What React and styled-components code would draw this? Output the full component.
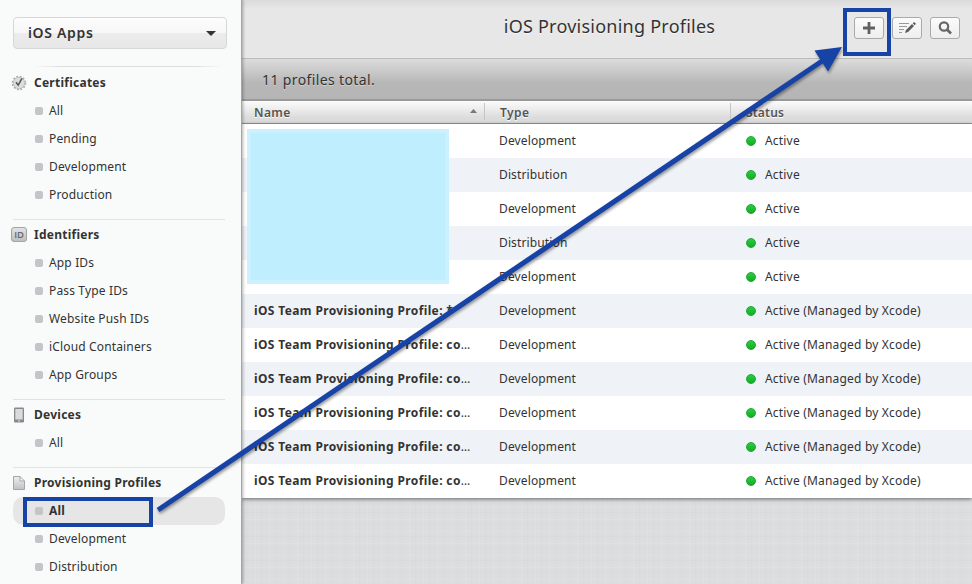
import React from 'react';
import styled, { createGlobalStyle, css } from 'styled-components';

const GlobalStyle = createGlobalStyle`
  *, *::before { box-sizing: border-box; }
  body { margin: 0; overflow: hidden; font-family: 'Noto Sans', 'Open Sans', sans-serif; color: #333; }
`;
const Page = styled.div`
  position: relative; display: flex; width: 972px; height: 584px; overflow: hidden;
`;
const Sidebar = styled.aside`
  width: 242px; flex: none; padding: 17px 0 0 13px; background: #f9fbfa;
  border-right: 1px solid #a4a5a5; box-shadow: 1px 0 3px rgba(0,0,0,.3); z-index: 1;
`;
const Picker = styled.button`
  display: flex; align-items: center; justify-content: space-between;
  width: 214px; height: 32px; padding: 0 10px 2px 14px; border: 1px solid #d6d7d7; border-radius: 4px;
  background: linear-gradient(#fdfdfd 0, #f6f6f6 50%, #ececec 51%, #e7e7e7 100%);
  font: 600 14px 'Noto Sans', sans-serif; letter-spacing: .66px; color: #333;
`;
const Caret = styled.svg`width: 10px; height: 5px; margin-top: 2px; fill: #333;`;
const TopRule = styled.div`
  width: 190px; height: 1px; margin: 17px 0 2px 20px;
  background: linear-gradient(90deg, transparent, #dcdedd 15%, #dcdedd 85%, transparent);
`;
const Section = styled.section`
  width: 212px;
  & + & { margin-top: 10px; border-top: 1px solid #e1e3e2; padding-top: 1px; }
`;
const SectionTitle = styled.h2`
  display: flex; align-items: center; height: 28px; margin: 0;
  font-size: 12px; font-weight: 700; letter-spacing: .25px; line-height: 26px;
  svg { flex: none; margin: 0 7px 0 -2px; }
`;
const Item = styled.div`
  display: flex; align-items: center; gap: 6px; height: 28px; padding-left: 22px; border-radius: 10px;
  font-size: 12px; letter-spacing: .15px; line-height: 26px;
  &::before { content: ''; width: 8px; height: 8px; border-radius: 2px; background: #c4c5c9; }
  ${p => p.$selected && css`background: #e6e6e6; font-weight: 700;`}
`;
const ItemText = styled.span`display: block; padding-bottom: 1px;`;
const Main = styled.main`
  display: flex; flex-direction: column; flex: 1;
`;
const Header = styled.header`
  display: grid; grid-template-columns: 1fr auto 1fr; height: 59px; align-items: center;
  padding: 0 12px 3px; border-bottom: 1px solid #bcbcbc;
  background: linear-gradient(#dadada, #e7e7e7 9px);
`;
const Title = styled.h1`
  grid-column: 2; margin: 0; padding: 0 0 4px 5px; font-size: 18px; font-weight: 400; letter-spacing: .24px;
  text-shadow: 0 1px rgba(255,255,255,.7);
`;
const Tools = styled.div`display: flex; gap: 8px; justify-content: flex-end;`;
const ToolButton = styled.button`
  display: grid; place-items: center; width: 30px; height: 22px; padding: 0;
  border: 1px solid #aaa; border-radius: 3px; background: linear-gradient(#fbfbfb, #eee);
`;
const Summary = styled.div`
  display: flex; align-items: center; height: 42px; padding-left: 20px;
  border-bottom: 2px solid #999; background: linear-gradient(#dcdcdc, #b7b7b7 60%, #b5b5b5);
  font-size: 14px; letter-spacing: .38px; text-shadow: 0 1px rgba(255,255,255,.4);
`;
const columns = css`display: grid; grid-template-columns: 243px 246px 1fr;`;
const Columns = styled.div`
  ${columns} height: 23px; border-bottom: 1px solid #999;
  background: linear-gradient(#fcfcfc, #dcdcdc 75%);
`;
const ColumnTitle = styled.div`
  display: flex; align-items: center; justify-content: space-between;
  height: 17px; margin-top: 2px; padding: 1px 7px 0 ${p => p.$first ? 12 : 15}px;
  font-size: 12px; font-weight: 600; letter-spacing: ${p => p.$last ? 0.2 : 0.4}px; color: #555;
  border-right: ${p => p.$last ? 0 : 1}px solid #c5c5c5; text-shadow: 0 1px #fff;
`;
const SortMark = styled.svg`width: 7px; height: 4px; margin-bottom: 3px; fill: #777;`;
const Table = styled.div`position: relative; box-shadow: 0 1px 4px rgba(0,0,0,.55);`;
const Row = styled.div`
  ${columns} height: 34px; align-items: center; padding-bottom: 1px;
  background: #fff; font-size: 12px; letter-spacing: .13px;
  &:nth-child(even) { background: #eff2f7; }
`;
const Name = styled.div`
  padding-left: 12px; font-weight: 700; letter-spacing: .37px; white-space: nowrap;
`;
const Ellipsis = styled.span`font-weight: 400; letter-spacing: 0;`;
const Type = styled.div`padding-left: 14px;`;
const Status = styled.div`
  display: flex; align-items: center; gap: 9px; padding-left: 15px;
  letter-spacing: .19px;
  &::before {
    content: ''; width: 10px; height: 10px; border-radius: 50%;
    border: 1px solid #1ea535; background: linear-gradient(#2dcc40, #10ae24);
  }
`;
const Redaction = styled.div`
  position: absolute; left: 5px; top: 5px; width: 202px; height: 155px;
  background: #bfeeff; border: 4px solid #cbf1fe;
`;
const Linen = styled.div`
  flex: 1; background-color: #dcdddf;
  background-image:
    repeating-linear-gradient(90deg, transparent 0 5px, rgba(175,180,188,.07) 5px 6px, transparent 6px 13px, rgba(255,255,255,.1) 13px 14px),
    repeating-linear-gradient(0deg, transparent 0 4px, rgba(255,255,255,.1) 4px 5px, transparent 5px 11px, rgba(175,180,188,.07) 11px 12px);
`;
const Highlight = styled.div`
  position: absolute; z-index: 2; border: 4px solid #1742a6;
  ${p => p.$target === 'add'
    ? 'left: 843px; top: 8px; width: 48px; height: 48px;'
    : 'left: 23px; top: 497px; width: 130px; height: 30px;'}
`;
const Pointer = styled.svg`
  position: absolute; inset: 0; z-index: 2; width: 972px; height: 584px; pointer-events: none;
  filter: drop-shadow(1px 2px 1.5px rgba(0,0,0,.4));
`;

const SealIcon = () => (
  <svg width="16" height="16" viewBox="0 0 16 16">
    <circle cx="8" cy="8" r="6.5" fill="none" stroke="#a6a7a9" strokeWidth="1.6" strokeDasharray="1.7 1.7" />
    <circle cx="8" cy="8" r="5.7" fill="#dcddde" stroke="#b4b5b7" strokeWidth=".8" />
    <path d="M5 7.2 7.2 10.2 11 3.4" fill="none" stroke="#555" strokeWidth="1.5" />
  </svg>
);
const IdText = styled.text`font: 600 9.5px 'Open Sans', sans-serif; letter-spacing: -.2px; fill: #66676a;`;
const IdIcon = () => (
  <svg width="16" height="16" viewBox="0 0 16 16">
    <defs><linearGradient id="plate" x2="0" y2="1"><stop stopColor="#e2e3e4" /><stop offset="1" stopColor="#bdbec0" /></linearGradient></defs>
    <rect x=".5" y=".5" width="15" height="14" rx="2.5" fill="url(#plate)" stroke="#a2a3a5" />
    <IdText x="8" y="11" textAnchor="middle">ID</IdText>
  </svg>
);
const DeviceIcon = () => (
  <svg width="16" height="16" viewBox="0 0 16 16">
    <rect x="3" y=".5" width="10" height="15" rx="1.2" fill="#88898e" />
    <rect x="4.3" y="2" width="7.4" height="10.5" fill="#dadbdd" />
    <path d="M7 14h2" stroke="#ddd" />
  </svg>
);
const FileIcon = () => (
  <svg width="16" height="16" viewBox="0 0 16 16">
    <defs><linearGradient id="paper" x2="0" y2="1"><stop stopColor="#eee" /><stop offset="1" stopColor="#c0c1c4" /></linearGradient></defs>
    <path d="M2.5 1.5H9L13.5 6V14.5H2.5ZM9 1.5V6H13.5" fill="url(#paper)" stroke="#a4a5a8" />
  </svg>
);

const sections = [
  { title: 'Certificates', Icon: SealIcon, items: ['All', 'Pending', 'Development', 'Production'] },
  { title: 'Identifiers', Icon: IdIcon, items: ['App IDs', 'Pass Type IDs', 'Website Push IDs', 'iCloud Containers', 'App Groups'] },
  { title: 'Devices', Icon: DeviceIcon, items: ['All'] },
  { title: 'Provisioning Profiles', Icon: FileIcon, items: ['All', 'Development', 'Distribution'], selected: 'All' },
];
const managed = 'Active (Managed by Xcode)';
const team = 'iOS Team Provisioning Profile: ';
const profiles = [
  ['', 'Development', 'Active'], ['', 'Distribution', 'Active'], ['', 'Development', 'Active'],
  ['', 'Distribution', 'Active'], ['', 'Development', 'Active'],
  [team + '*', 'Development', managed],
  ...Array.from({ length: 5 }, () => [team + 'co', 'Development', managed, true]),
];

export default function App() {
  return (
    <Page>
      <GlobalStyle />
      <Sidebar>
        <Picker>iOS Apps<Caret viewBox="0 0 10 5"><path d="M0 0H10L5 5Z" /></Caret></Picker>
        <TopRule />
        {sections.map(({ title, Icon, items, selected }) => (
          <Section key={title}>
            <SectionTitle><Icon /><ItemText>{title}</ItemText></SectionTitle>
            {items.map(i => <Item key={i} $selected={i === selected}><ItemText>{i}</ItemText></Item>)}
          </Section>
        ))}
      </Sidebar>
      <Main>
        <Header>
          <Title>iOS Provisioning Profiles</Title>
          <Tools>
            <ToolButton aria-label="Add">
              <svg width="14" height="14" viewBox="0 0 14 14"><path d="M7 1V13M1 7H13" stroke="#606060" strokeWidth="2.8" /></svg>
            </ToolButton>
            <ToolButton aria-label="Edit">
              <svg width="18" height="14" viewBox="0 0 18 14">
                <path d="M1 2.5H11M1 5.5H9M1 8.5H6M1 11.5H4" stroke="#999" />
                <path d="M7 12 8 9 14 3 16 5 10 11ZM14.7 2.3 16 1 18 2.8 16.7 4.2Z" fill="#5c5c5c" />
              </svg>
            </ToolButton>
            <ToolButton aria-label="Search">
              <svg width="14" height="14" viewBox="0 0 14 14" fill="none" stroke="#666">
                <circle cx="6" cy="5.5" r="4.2" strokeWidth="2.2" /><path d="M9 8.5 13 12.5" strokeWidth="2.6" />
              </svg>
            </ToolButton>
          </Tools>
        </Header>
        <Summary>11 profiles total.</Summary>
        <Columns>
          <ColumnTitle $first>Name<SortMark viewBox="0 0 7 4"><path d="M0 4 3.5 0 7 4Z" /></SortMark></ColumnTitle>
          <ColumnTitle>Type</ColumnTitle>
          <ColumnTitle $last>Status</ColumnTitle>
        </Columns>
        <Table>
          {profiles.map(([name, type, status, clipped], i) => (
            <Row key={i}>
              <Name>{name}{clipped && <Ellipsis>…</Ellipsis>}</Name>
              <Type>{type}</Type>
              <Status>{status}</Status>
            </Row>
          ))}
          <Redaction />
        </Table>
        <Linen />
      </Main>
      <Highlight />
      <Highlight $target="add" />
      <Pointer viewBox="0 0 972 584">
        <path d="M158 510 828 57" stroke="#1742a6" strokeWidth="5" />
        <path d="M842 47 828 71.5 814.5 50.5Z" fill="#1742a6" />
      </Pointer>
    </Page>
  );
}
